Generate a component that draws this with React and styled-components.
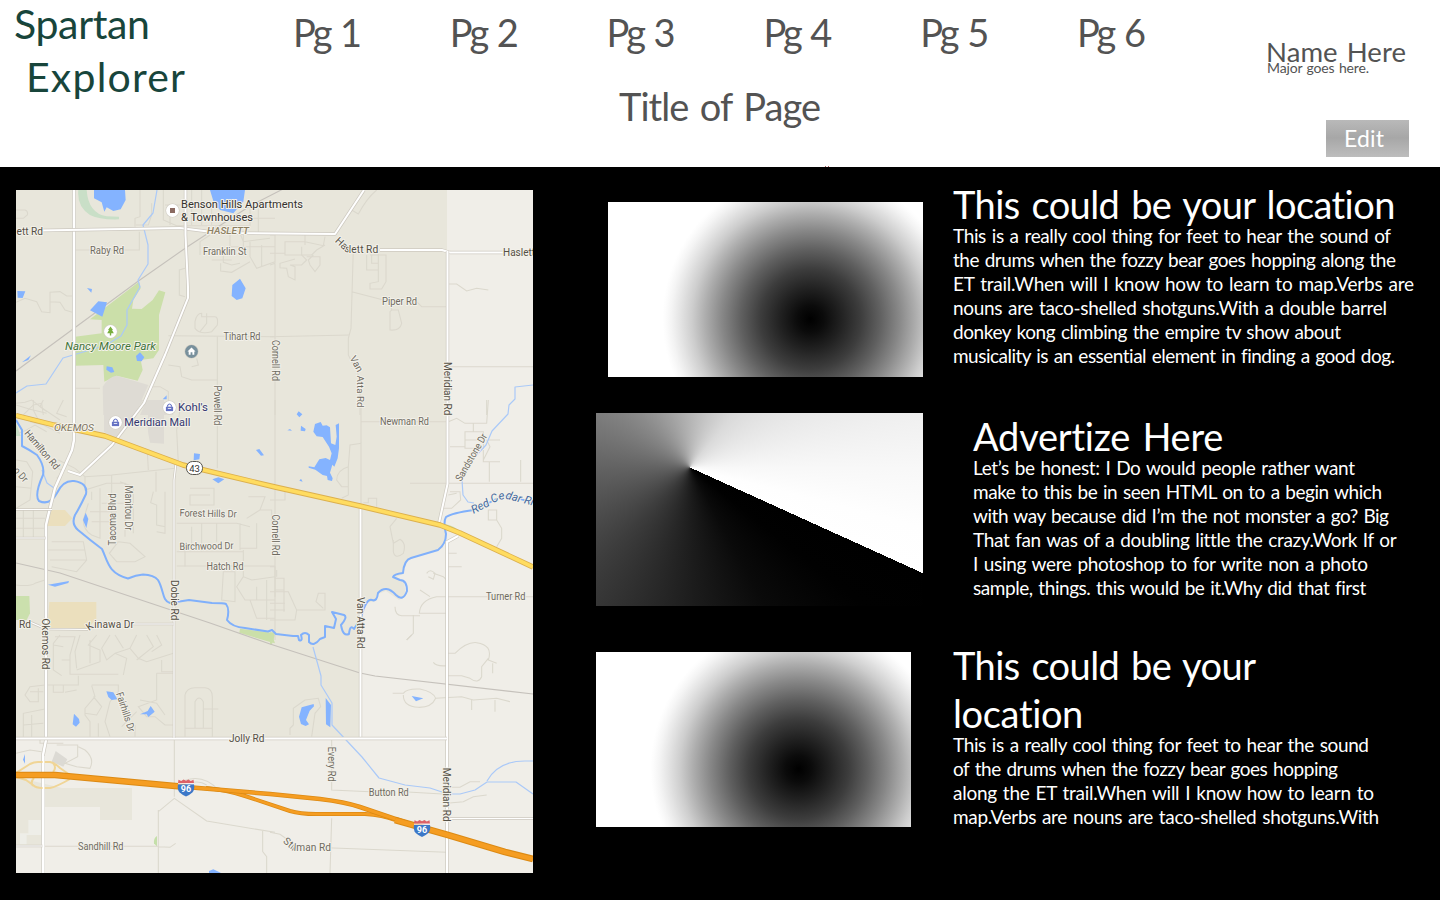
import React, { useLayoutEffect, useRef, useState } from "react";
import styled, { createGlobalStyle } from "styled-components";

const GlobalStyle = createGlobalStyle`
  *, *::before, *::after { box-sizing: border-box; }
  html, body { margin: 0; background: #000; }
  body {
    width: 1440px;
    height: 900px;
    overflow: hidden;
    font-family: Lato, "Liberation Sans", sans-serif;
    color: #535353;
  }
`;

/* ---------- text that is tracked out or in to a fixed measure ---------- */

const Tracked = styled.span`
  display: inline-block;
  white-space: nowrap;
  word-spacing: 0.07em;
`;

function FitText({ width, children }) {
  const ref = useRef(null);
  const [spacing, setSpacing] = useState(0);
  useLayoutEffect(() => {
    const natural = ref.current.getBoundingClientRect().width;
    setSpacing((width - natural) / (children.length - 1));
  }, [width, children]);
  return (
    <Tracked ref={ref} style={{ letterSpacing: `${spacing}px` }}>
      {children}
    </Tracked>
  );
}

/* ---------- header ---------- */

const Page = styled.div`
  width: 1440px;
  height: 900px;
  display: flex;
  flex-direction: column;
  background: #000;
`;

const Header = styled.header`
  height: 167px;
  flex: none;
  display: flex;
  background:
    linear-gradient(#b06060, #b06060) 825px 166px / 1px 1px no-repeat,
    linear-gradient(#b06060, #b06060) 828px 166px / 1px 1px no-repeat,
    #fff;
`;

const Brand = styled.h1`
  width: 292px;
  margin: 0;
  padding-left: 14px;
  font-size: 41px;
  font-weight: 400;
  line-height: 53px;
  color: #18453b;
  margin-top: -3px;
`;

const BrandLine = styled.div`
  padding-left: ${(p) => p.$indent || 0}px;
`;

const Center = styled.div`
  width: 974px;
  padding-top: 8px;
`;

const Nav = styled.nav`
  display: flex;
  height: 74px;
  padding-left: 1px;
`;

const NavItem = styled.a`
  width: 156.8px;
  flex: none;
  font-size: 38px;
  line-height: 49px;
`;

const PageTitle = styled.h2`
  margin: 0 0 0 327px;
  font-size: 38px;
  font-weight: 400;
  line-height: 49px;
`;

const Account = styled.div`
  flex: 1;
  padding-top: 36px;
`;

const UserName = styled.div`
  font-size: 27.5px;
  line-height: 32px;
`;

const Major = styled.div`
  margin: -8px 0 0 1px;
  font-size: 14px;
  line-height: 16px;
`;

const EditButton = styled.button`
  display: block;
  width: 83px;
  height: 37px;
  margin: 44px 0 0 60px;
  padding: 0 0 0 18px;
  border: 0;
  text-align: left;
  font: 400 23px/33px Lato, "Liberation Sans", sans-serif;
  color: #fff;
  background: linear-gradient(#b9b9b9, #a7a7a7 48%, #bdbdbd);
`;

/* ---------- body ---------- */

const Main = styled.main`
  flex: 1;
  display: flex;
`;

const MapFrame = styled.section`
  width: 517px;
  height: 683px;
  margin: 23px 63px 0 16px;
  flex: none;
  overflow: hidden;
`;

const Listings = styled.section`
  flex: 1;
  padding-top: 13px;
`;

const Listing = styled.article`
  display: flex;
  height: ${(p) => p.$height}px;
`;

const PictureCell = styled.div`
  width: 357px;
  flex: none;
  padding: ${(p) => p.$top}px 0 0 ${(p) => p.$left}px;
`;

const RadialPicture = styled.div`
  width: 315px;
  height: 175px;
  background: radial-gradient(
    circle 148px at 202.5px 117px,
    #000 0%, #0b0b0b 9%, #222 21%, #3d3d3d 34%, #606060 47%,
    #888 60%, #adadad 71%, #cdcdcd 80%, #e4e4e4 88%, #f4f4f4 94%, #fcfcfc 98%, #fff 100%
  );
`;

const ConicPicture = styled.div`
  width: 327px;
  height: 193px;
  background: conic-gradient(
    from 114.4deg at 94px 54.5px,
    #000 0deg, #010101 14deg, #0a0a0a 37deg, #1c1c1c 64deg, #3c3c3c 108deg, #626262 155deg,
    #898989 200deg, #b4b4b4 245deg, #dadada 285deg, #ededed 318deg, #f8f8f8 336deg,
    #fefefe 350deg, #fff 360deg
  );
`;

const Copy = styled.div`
  padding-left: ${(p) => p.$indent || 0}px;
  color: #fff;
`;

const CopyTitle = styled.h3`
  margin: 0 0 -4px;
  font-size: 38px;
  font-weight: 400;
  line-height: 48px;
`;

const CopyText = styled.p`
  margin: 0;
  font-size: 19px;
  line-height: 23.9px;
`;

const listings = [
  {
    kind: "radial", left: 12, top: 22, height: 232, indent: 0,
    title: [["This could be your location", 443]],
    lines: [
      ["This is a really cool thing for feet to hear the sound of", 438],
      ["the drums when the fozzy bear goes hopping along the", 443],
      ["ET trail.When will I know how to learn to map.Verbs are", 461],
      ["nouns are taco-shelled shotguns.With a double barrel", 434],
      ["donkey kong climbing the empire tv show about", 388],
      ["musicality is an essential element in finding a good dog.", 442],
    ],
  },
  {
    kind: "conic", left: 0, top: 1, height: 229, indent: 20,
    title: [["Advertize Here", 251]],
    lines: [
      ["Let’s be honest: I Do would people rather want", 382],
      ["make to this be in seen HTML on to a begin which", 409],
      ["with way because did I’m the not monster a go? Big", 416],
      ["That fan was of a doubling little the crazy.Work If or", 423],
      ["I using were photoshop to for write non a photo", 395],
      ["sample, things. this would be it.Why did that first", 393],
    ],
  },
  {
    kind: "radial", left: 0, top: 11, height: 240, indent: 0,
    title: [["This could be your", 303], ["location", 131]],
    lines: [
      ["This is a really cool thing for feet to hear the sound", 416],
      ["of the drums when the fozzy bear goes hopping", 385],
      ["along the ET trail.When will I know how to learn to", 421],
      ["map.Verbs are nouns are taco-shelled shotguns.With", 426],
    ],
  },
];

/* ---------- map ---------- */

const MapSvg = styled.svg`
  display: block;
  width: 517px;
  height: 683px;
  font-family: Roboto, "Liberation Sans", sans-serif;
`;

const Label = styled.text`
  fill: ${(p) => p.$color || "#6f6b61"};
  font-size: ${(p) => p.$size || 10.2}px;
  font-style: ${(p) => (p.$italic ? "italic" : "normal")};
  font-weight: ${(p) => p.$weight || 400};
  stroke: #f3f1ea;
  stroke-width: 2px;
  stroke-linejoin: round;
  paint-order: stroke;
`;

const Lane = styled.path`
  fill: none;
  stroke: #dbd8cd;
  stroke-width: 3.2px;
`;

const Water = styled.path`
  fill: #84b3ff;
`;

const Creek = styled.path`
  fill: none;
  stroke: #aac9f8;
  stroke-width: 1.2px;
  stroke-linejoin: round;
`;

/* A sixth of the map, drawn on a grid three times finer than the page. */
const Tile = ({ x, y, children }) => (
  <g transform={`translate(${x} ${y}) scale(0.33333)`}>{children}</g>
);

const Road = ({ d, w = 3.4 }) => (
  <g fill="none" strokeLinejoin="round">
    <path d={d} stroke="#cdc9c0" strokeWidth={w} />
    <path d={d} stroke="#fff" strokeWidth={w - 1.4} />
  </g>
);

const labels = [
  ["Benson Hills Apartments", 181, 207.7, 122, 0, { $size: 11, $color: "#35322e" }],
  ["& Townhouses", 181, 220.7, 72, 0, { $size: 11, $color: "#35322e" }],
  ["ett Rd", 16.5, 234.7, 26.5, 0, { $color: "#555046" }],
  ["HASLETT", 207, 234.4, 42, 0, { $italic: true, $color: "#8d8062", $weight: 500, $size: 9.8 }],
  ["Raby Rd", 90, 254, 34, 0],
  ["Franklin St", 203, 255.4, 43.5, 0],
  ["Nancy Moore Park", 65, 349.6, 91, 0, { $italic: true, $size: 11.5, $color: "#42753a" }],
  ["Tihart Rd", 223.5, 339.6, 37, 0],
  ["Kohl's", 178, 411, 30, 0, { $size: 11.3, $color: "#323770" }],
  ["Meridian Mall", 124.3, 425.8, 66, 0, { $size: 11.3, $color: "#323770" }],
  ["OKEMOS", 54, 430.6, 40, 0, { $italic: true, $color: "#7d7462", $size: 9.8 }],
  ["Haslett", 503, 256, 32, 0, { $color: "#555046" }],
  ["Piper Rd", 382, 305.4, 35, 0],
  ["Newman Rd", 380, 425.2, 49, 0],
  ["Cornell Rd", 271.5, 340, 41, 90],
  ["Cornell Rd", 271.5, 514.5, 41, 90],
  ["Powell Rd", 214, 385.5, 40, 90],
  ["Meridian Rd", 443.5, 362, 53.5, 90, { $color: "#555046" }],
  ["Meridian Rd", 442.5, 767.7, 54, 90, { $color: "#555046" }],
  ["Van Atta Rd", 357, 597, 51.5, 90, { $color: "#555046" }],
  ["Dobie Rd", 170.5, 580, 40.5, 90, { $color: "#555046" }],
  ["Manitou Dr", 124.5, 485.5, 45, 90],
  ["Tacoma Blvd", 115.5, 545.5, 52, -90],
  ["Hamilton Rd", 24, 433.5, 48, 50, { $color: "#666158" }],
  ["o Dr", 13, 471, 16, 48],
  ["Sandstone Dr", 461, 482, 53, -60],
  ["Forest Hills Dr", 179.5, 516.3, 57, 1.2],
  ["Birchwood Dr", 179.5, 550, 54, -1],
  ["Hatch Rd", 206.5, 569.6, 37, 0],
  ["Turner Rd", 486, 600.3, 39.5, 0],
  ["Rd", 19, 628, 12, 0, { $color: "#555046" }],
  ["Okemos Rd", 42, 618.5, 51, 90, { $color: "#555046" }],
  ["Fairhills Dr", 116, 693.5, 41, 72],
  ["Jolly Rd", 229, 741.8, 35.5, 0, { $color: "#555046" }],
  ["Every Rd", 327.5, 746.7, 35, 90],
  ["Button Rd", 368.7, 796.4, 40, 0],
  ["Sandhill Rd", 78, 850.3, 45.5, 0],
];

function MapPin({ x, y, children, fill = "#fff" }) {
  return (
    <g transform={`translate(${x} ${y})`}>
      <circle r="7" fill="#cfccc3" />
      <circle r="6.4" fill={fill} />
      {children}
    </g>
  );
}

const Bag = () => (
  <g>
    <path d="M-3.6 -.8H3.6V3.6H-3.6Z" fill="#6572c3" />
    <path d="M-1.9 -.8V-2Q0 -5 1.9 -2V-.8" fill="none" stroke="#6572c3" strokeWidth="1.1" />
    <path d="M-1.7 1H1.7" stroke="#fff" strokeWidth=".8" />
  </g>
);

const Shield = ({ x, y }) => (
  <g transform={`translate(${x} ${y})`}>
    <path d="M-8 -3.3Q-9 2 -6.3 5Q-3.5 7.6 0 9Q3.5 7.6 6.3 5Q9 2 8 -3.3Z" fill="#3c78c8" />
    <path d="M-7.5 -7.8L-4.8 -6.5L-2.4 -8L0 -6.7L2.4 -8L4.8 -6.5L7.5 -7.8L8 -4.3H-8Z" fill="#dc6268" />
    <path d="M-8 -3.8H8" stroke="#fff" strokeWidth=".9" />
    <text x="0" y="4.6" textAnchor="middle" fontSize="9" fontWeight="700" fill="#fff">96</text>
  </g>
);

const RIVER =
  "M16 420L22 430V446Q30 450 37 455Q45 466 43 475Q34 495 39 501Q50 506 57 493Q63 480 74 481Q88 483 86 494Q80 507 75 515Q71 524 78 530Q90 540 102 549C108 562 108 573 128 578.5Q136 575 143 574.5Q154 575 158 580C164 590 162 601 170 603L189 600L212 603Q224 603 226 604Q230 609 227 620Q232 627 245 628L268 631.5L272 630L276 634L293 636L298 636L299 640Q303 642 301 635Q305 631 309 635L309 642Q314 647 320 639L325 637L325 626L334 628L336 619L332 612L344 615Q348 617 341 625Q343 637 349 634Q350 624 354 629L361 618Q366 598 372 600Q377 602 378 593Q386 584 396 595Q403 602 407 591Q407 580 400 580L393 577Q394 574 403 573Q404 560 411 558L438 550Q446 544 446 534Q443 522 446 517Q452 513 474 510Q490 503 501 496Q515 496 533 503";

const HIGHWAY = "M16 415.500L54 425L105 436L183 465L275 487L360 506L440 525L460 533L533 567";
const MOTORWAY = "M16 775H55L186 787M395 820L448 835L505 852L533 859";
const WESTBOUND = "M186 787L270 794L320 799Q345 802 360 807L410 824";
const EASTBOUND = "M206 788Q227 790 245 796Q275 806 290 811Q300 814 316 814H365Q383 815 395 820";

function AreaMap() {
  return (
    <MapSvg viewBox="16 190 517 683">
      <defs>
        <path id="haslett" d="M334.5 241.5L345.5 251.5Q347 252.5 350 252.5H385" />
        <path id="atta" d="M349.5 358L356 370Q357 371.5 357 374V408" />
        <path id="cedar" d="M473.5 514L490 505.5Q499 498.5 507 499L545 509" />
        <path id="kinawa" d="M89 631L94 627.5H140" />
        <path id="stillman" d="M282.5 842L292 850Q293 851 296 851H340" />
      </defs>
      <rect x="16" y="190" width="517" height="683" fill="#f0eee8" />
      <path
        d="M16 190H447V484L439 520L446 534L443 548L407 560L403 574L394 578L404 582L406 596L399 600L386 591L378 594L376 601L366 603L361 615V738H16Z"
        fill="#e8e6db"
      />
      <path d="M16 777L62 788H132V820H100V807H44V845H16Z" fill="#e8e6db" />

      {/* parks, campus and built-up blocks */}
      <Tile x={10} y={185}>
        <path d="M205 15Q200 65 240 90Q270 105 327 103V95L290 94Q235 85 230 15Z" fill="#c9dfc7" />
        <path d="M387 290L240 403L275 405V445L195 455V542L280 540L283 590L320 572L383 587L398 555L392 525L430 520L447 495V390L466 322L447 316L428 345L395 372L366 371L370 345L392 310Z" fill="#cbdfa9" />
        <path d="M278 605Q295 575 320 572L415 600L375 690H280Z" fill="#dedbd4" />
        <path d="M410 645L490 655V690H390Z" fill="#dedbd4" />
      </Tile>
      <Tile x={10} y={400}>
        <path d="M282 0H400L320 118L282 95Z" fill="#dedbd4" />
        <path d="M414 0H462V131L420 128L414 95Z" fill="#dedbd4" />
        <path d="M120 330H165L187 355L165 378H110Z" fill="#ebdfbd" />
        <path d="M118 606H259V658L230 688H112Z" fill="#ebdfbd" />
        <path d="M18 588H58L60 640L50 660H18Z" fill="#cbe0ad" />
        <path d="M18 70L32 108H18Z" fill="#c9dfc7" />
        <path d="M690 686L784 698L795 730L780 726L688 698Z" fill="#cbdfa9" />
      </Tile>
      <Tile x={270} y={635}><path d="M0 -8H18L5 30L0 28Z" fill="#cbdfa9" /></Tile>
      <Tile x={270} y={400}><path d="M525 372Q555 378 565 392L545 392Z" fill="#cbdfa9" /></Tile>
      <Tile x={10} y={635}>
        <path d="M137 348L172 373L160 395L125 380Z" fill="#dcdad4" />
        <path d="M55 555H93V600H50V628H30V595H55Z" fill="#eeeee8" />
        <path d="M441 603Q430 610 432 625L441 635Z" fill="#c4dfa9" />
      </Tile>

      {/* minor streets */}
      <Tile x={10} y={185}>
        <Lane d="M195 195H388V140M375 125V100L390 95V15M425 55V90L415 120H378M18 75H45Q55 78 52 90L40 100H18" />
        <Lane d="M18 352L45 340L80 350L95 380L120 383V322L150 320L170 333H187M120 350L150 352L165 375L187 382" />
        <Lane d="M460 15V105L500 122H720M545 15V120M575 15V120M605 60V120M465 60H520M545 65H600M720 60V125M745 70V150M700 100H795M480 75V120" />
        <Lane d="M640 185V232L665 240L690 235M570 210V170L600 150M605 225H665M660 145V185H795M700 145V185M720 170V215L740 250L795 230M755 180V245M632 235V258L665 262L720 230M690 145L700 170L780 160" />
        <Lane d="M525 250L508 255V330L525 335M475 452L795 455M622 455V690M575 395H615Q625 395 622 420L605 440Q570 450 555 430V410Q560 385 575 385ZM590 385V415L570 440" />
        <Lane d="M475 540L510 545L515 575L545 585H622M560 520L565 540L545 545M195 610H270M420 605H450L475 620V690M18 655L45 652L65 645L110 680M40 690L70 660L95 655L100 690" />
      </Tile>
      <Tile x={270} y={185}>
        <Lane d="M320 15Q290 40 265 87L245 75M0 150H15V235L0 240M15 235V690M0 205H45V170H105L160 182L165 155M105 150V180M45 185V210H125L140 195L165 180" />
        <Lane d="M95 185V210L110 225L95 240H60L75 245V285L55 275L50 250L30 248V235L75 222M110 215H150V240L135 260L120 240L115 225L130 210" />
        <Lane d="M250 190L243 430L235 460V510L270 580V690M300 210H348V290L335 312H300V295L325 290V205M290 210V255H325M305 210V235H325M245 320L360 350L365 375M0 455L240 450" />
        <Lane d="M440 350L455 365H530M365 375H385L395 415Q390 438 360 435V380ZM535 297H560L590 318L620 310L655 315M535 545H790M650 690V645" />
      </Tile>
      <Tile x={10} y={400}>
        <Lane d="M18 15L60 28L110 40M70 0V30L90 70M100 0L90 20L150 60M160 0L140 40L170 50M25 100L50 90L75 75L110 95M60 65L100 75L150 100" />
        <Lane d="M18 180L50 185L68 215L60 300L18 325M18 260L65 265M120 190L160 215L140 235M145 180L195 205L225 230L305 225L495 205M225 230V270L290 250H345V410M245 275V300M270 265V415L245 405Q220 390 220 360L235 310M305 225V405M275 310H345M245 365H310M240 335H320M330 245L370 260V400" />
        <Lane d="M325 425L360 430L405 470L375 485H320L298 460L325 425M430 275L422 308L440 315V375L465 380V400L440 395M438 215V275M465 275V400M412 155L415 210M515 0L500 90L505 190" />
        <Lane d="M540 265H612V315H540V285H600M500 370H680L720 380M545 380V440M575 370V455M620 370V425M500 455H700M500 498H795M525 500V440M690 370V450M740 370V445H690M700 450V530L725 540L795 530M715 290H765L750 330L710 355M750 330H785V390M640 515H675V605L635 600ZM700 530L680 560L705 600H795M720 600L740 655H795M740 600V560M770 540V660" />
        <Lane d="M18 385H105M18 355H105M125 425H220L230 480L200 515L125 500M115 450H225M120 480H230M70 325V415M40 328V415M18 555Q60 560 75 550L105 540M622 0V205" />
      </Tile>
      <Tile x={270} y={400}>
        <Lane d="M15 0V720M273 65H535M273 0V320M275 130L240 135L235 200Q200 210 200 240L215 260H235V200M235 260V285L215 295M45 270V300H0M45 300H20M320 320V295H295V308H280M380 355L360 380L370 430L390 418Q410 430 400 460Q375 480 370 455V420" />
        <Lane d="M420 250H790M535 65L560 55L585 70H650L655 0M585 95H640V145H585ZM585 120H640M610 70V95M540 140H585M655 120H690M640 150V185H690M658 185V245M752 180V245M640 180L660 140L650 120M540 275H570L572 300L545 325H520M535 285L560 280M655 330H680V360H655ZM680 360L695 385V415L680 440M535 460H560M535 500H575" />
        <Lane d="M790 590H500Q450 600 448 640H530M375 620Q375 645 395 647H450M450 570L480 590M430 645V700L410 720M470 520Q480 505 495 520L490 538L475 530M490 520L520 530L530 540" />
        <Lane d="M0 500H15V590M15 535H42V570H15M0 575H55L80 630L75 660H0M42 570V635M0 610H45M80 630H165V580H145L138 605L160 625M0 630H45M20 510V530" />
      </Tile>
      <Tile x={10} y={635}>
        <Lane d="M135 5H195L180 60V118H325M150 0L130 25V105L155 122M130 30L160 35M155 75H180M200 105L270 80V45L235 30L260 0M210 0L195 50L200 100M240 15V85M300 0L275 40L290 75L315 55L350 70L340 120M315 55L360 40L385 70L410 80L490 55M380 0L360 40M410 0L430 35L380 75M440 0L455 30L425 50M455 75V110H490M315 0L340 40" />
        <Lane d="M110 150H205V122M130 150V172H160V150M165 172L200 165M105 150L60 155L45 180L60 200H85V160M60 170H100M105 222L40 235V305M40 270L100 265M65 240V305M245 150H325V170L300 200M245 152L255 185L225 220V240L240 260V305M225 235L260 240L275 215L250 185M300 200L285 260L300 305M265 265V305M440 115V195L385 215L410 245H435L465 270H490M390 195L440 205L465 240M375 270V305M335 275L380 230" />
        <Lane d="M490 115H440M525 305V180Q530 158 555 158H585Q607 160 607 185V305M525 280H607M555 280V200Q567 178 580 200V280M580 222H625M140 330H203V365L165 385L200 395L240 400Q255 370 225 345L205 335M90 312V325H160M18 355L60 345L95 350" />
        <Lane d="M105 634H445M445 690V530L493 490L590 558L795 592M493 315V485M445 525V720M445 635L480 637L497 625M758 588V650L770 665V715M495 450Q570 405 625 465M515 455Q560 430 590 450" />
      </Tile>
      <Tile x={270} y={635}>
        <Lane d="M490 82Q500 95 530 92M530 55H555Q590 20 620 23Q670 30 655 75L680 85M655 70L635 95V125Q625 148 600 130L575 122H530M410 15L425 0M368 175H400Q410 160 450 162Q490 170 497 190Q485 218 445 217Q400 215 400 180M497 190L575 185L610 195L680 190L720 200M605 195V225M675 195V230M668 85V115" />
        <Lane d="M60 300V280L70 270V220L105 195L145 190L152 215L135 235L125 305M185 310V465L300 470M400 470L530 478M530 457H570L600 440H630M530 505L580 500L610 485L650 480M185 550L180 715M170 638L530 652M0 592L30 598L50 612" />
      </Tile>

      {/* railways */}
      <g fill="none" stroke="#c5c1bb" strokeWidth="1.1">
        <path d="M16 371L137 282L187 247L250 206L285 188" />
        <path d="M16 563L60 573L150 603L210 623L270 644L360 673L375 676L533 694" />
      </g>

      {/* creeks, river and lakes */}
      <Creek d="M157 190L153 213L143 225L148 245V264L138 280L140 287L127 310V325L121 336L106 345L90 350L63 358L46 384L27 386L16 393" />
      <Creek d="M42 470L47 483L54 488" />
      <Creek d="M533 385L515 387V399L509 405L508 414L492 431L486 445L472 460L462 480L463 495L468 502L474 503" />
      <Creek d="M313 647L321 676V685L332 703V725L362 757L379 778L405 785L430 788L448 794H460L475 790L487 782H516L533 794M487 781Q498 761 525 761H533" />
      <path d={RIVER} fill="none" stroke="#80b0fb" strokeWidth="2" strokeLinejoin="round" />
      <Tile x={10} y={185}>
        <Water d="M252 15H345L347 45L332 73L310 78L290 67L283 80L275 52L252 40ZM600 15H705L700 50L670 85L630 75L612 55ZM690 281L707 310L697 340L680 345L665 333L667 300ZM265 349L291 352L277 395L240 376ZM231 309L246 312L244 323ZM22 318L46 319L38 339L23 338ZM36 532L63 511L55 525ZM378 513L390 502L403 517L395 529L381 528ZM290 544L307 547L313 561L303 563L289 554ZM458 643L470 631V643Z" />
      </Tile>
      <Tile x={10} y={400}>
        <Water d="M552 160L570 162L568 178L551 181ZM607 238L625 232L643 238L625 250ZM738 150L748 147L762 166L753 167ZM227 338L235 357L229 384L219 360ZM114 554L177 543L175 549L135 560Z" />
      </Tile>
      <Tile x={270} y={400}>
        <Water d="M86 34L97 43L88 52L80 43ZM52 91L60 87L66 92ZM93 77L107 87L105 94L92 92ZM135 72L152 66L158 77L170 76L180 82L183 130L196 135L200 110L197 75L207 70V145L203 175L193 200L187 194L180 218L188 235L186 243L173 240L171 228L158 225L136 209L116 203V199L133 202L148 178L167 174L180 180L185 160L177 140L158 111L140 109L130 95ZM88 242L93 236L98 245Z" />
      </Tile>
      <Tile x={10} y={635}>
        <Water d="M192 236L207 252L209 263L198 275L188 268ZM289 169L310 172L322 193L305 195L295 186ZM422 213L434 230L415 246L410 238L390 238L413 228ZM45 357V386L39 374ZM597 708L610 703L632 713V720H597Z" />
      </Tile>
      <Tile x={270} y={635}>
        <Water d="M131 207L132 214L119 227L108 255L117 268L107 273L93 267L87 245L95 217ZM167 189L183 210L181 277L168 268ZM425 183L460 190L438 199Z" />
      </Tile>

      {/* white roads */}
      <Road d="M74 190V440L72 450L55 488L50 508L46 525V740L43 755V873" w={3.8} />
      <Road d="M40 230.5L180 228L220 233L335 234L364 190M380 250H442L450 252.5H503" />
      <Road d="M185.5 190V235L188 287V298L165 355L144 403L112 445L80 475L68 471" />
      <Road d="M447.5 251V484L439 523M458 536L447 542V873" />
      <Road d="M360.5 507V738" />
      <Road d="M16 738.5H447" />
      <Road d="M176 463L174 480V738" w={2.6} />
      <Road d="M16 509.5H52M16 538H46M30 622L46 629L88 629.5M130 624H174M16 846H43M447 818.5H533" w={2.6} />

      {/* state road, ramps and motorway */}
      <g fill="none" strokeLinejoin="round">
        <path d="M16 773L30 764Q34 762 38 762H50Q55 763 60 768L70 775M16 777L26 780L33 785Q36 788 42 788H50Q56 787 70 779M33 786Q30 782 34 778M53 763Q57 768 53 772" stroke="#f0d596" strokeWidth="2" />
        <path d="M43.500 756V873" stroke="#fff" strokeWidth="1.800" />
        <path d={HIGHWAY} stroke="#dcb04e" strokeWidth="5.4" />
        <path d={HIGHWAY} stroke="#ffdc60" strokeWidth="3.6" />
        <path d={EASTBOUND} stroke="#dc8a14" strokeWidth="4" />
        <path d={EASTBOUND} stroke="#f59d22" strokeWidth="2.6" />
        <path d={WESTBOUND} stroke="#dc8a14" strokeWidth="4.5" />
        <path d={WESTBOUND} stroke="#f59d22" strokeWidth="3" />
        <path d={MOTORWAY} stroke="#dc8a14" strokeWidth="6.6" />
        <path d={MOTORWAY} stroke="#f59d22" strokeWidth="4.6" />
      </g>

      {/* place names */}
      {labels.map(([text, x, y, len, angle, look = {}]) => (
        <Label
          key={`${text}-${x}-${y}`}
          x={x}
          y={y}
          textLength={len}
          lengthAdjust="spacingAndGlyphs"
          transform={angle ? `rotate(${angle} ${x} ${y})` : undefined}
          {...look}
        >
          {text}
        </Label>
      ))}
      <Label $color="#555046" $size={10.3}><textPath href="#haslett">Haslett Rd</textPath></Label>
      <Label $size={9.8}><textPath href="#atta">Van Atta Rd</textPath></Label>
      <Label $size={11.5} $italic $color="#44699f"><textPath href="#cedar">Red Cedar Riv</textPath></Label>
      <Label $color="#555046"><textPath href="#kinawa">Kinawa Dr</textPath></Label>
      <Label><textPath href="#stillman">Stillman Rd</textPath></Label>

      {/* markers */}
      <MapPin x={172.5} y={210.5}><rect x="-2.5" y="-2.5" width="5" height="5" fill="#8b6b62" /></MapPin>
      <MapPin x={110.5} y={331.5}>
        <path d="M0 -5L2.5 -1.5H1.5L3.3 1.8H.7V4H-.7V1.8H-3.3L-1.5 -1.5H-2.5Z" fill="#78ae3e" />
      </MapPin>
      <MapPin x={191.5} y={351.5} fill="#78909c">
        <path d="M0 -4L4 0H2.8V3.3H.9V.8H-.9V3.3H-2.8V0H-4Z" fill="#fff" />
      </MapPin>
      <MapPin x={169.5} y={407.5}><Bag /></MapPin>
      <MapPin x={115.5} y={422.5}><Bag /></MapPin>
      <rect x="186.5" y="461.5" width="16" height="13" rx="6" fill="#fff" stroke="#55534d" />
      <text x="194.5" y="471.5" textAnchor="middle" fontSize="9.500" fill="#333">43</text>
      <Shield x={186} y={787.5} />
      <Shield x={422} y={828} />
    </MapSvg>
  );
}

/* ---------- page ---------- */

const FittedLines = ({ lines }) =>
  lines.map(([text, width]) => (
    <React.Fragment key={text}>
      <FitText width={width}>{text}</FitText>
      <br />
    </React.Fragment>
  ));

export default function App() {
  return (
    <>
      <GlobalStyle />
      <Page>
        <Header>
          <Brand>
            <BrandLine><FitText width={136}>Spartan</FitText></BrandLine>
            <BrandLine $indent={12}><FitText width={159}>Explorer</FitText></BrandLine>
          </Brand>
          <Center>
            <Nav>
              {[1, 2, 3, 4, 5, 6].map((n) => (
                <NavItem key={n}><FitText width={69}>{`Pg ${n}`}</FitText></NavItem>
              ))}
            </Nav>
            <PageTitle><FitText width={202}>Title of Page</FitText></PageTitle>
          </Center>
          <Account>
            <UserName><FitText width={140}>Name Here</FitText></UserName>
            <Major><FitText width={102}>Major goes here.</FitText></Major>
            <EditButton><FitText width={40}>Edit</FitText></EditButton>
          </Account>
        </Header>
        <Main>
          <MapFrame><AreaMap /></MapFrame>
          <Listings>
            {listings.map((item, i) => (
              <Listing key={i} $height={item.height}>
                <PictureCell $top={item.top} $left={item.left}>
                  {item.kind === "radial" ? <RadialPicture /> : <ConicPicture />}
                </PictureCell>
                <Copy $indent={item.indent}>
                  <CopyTitle><FittedLines lines={item.title} /></CopyTitle>
                  <CopyText><FittedLines lines={item.lines} /></CopyText>
                </Copy>
              </Listing>
            ))}
          </Listings>
        </Main>
      </Page>
    </>
  );
}
